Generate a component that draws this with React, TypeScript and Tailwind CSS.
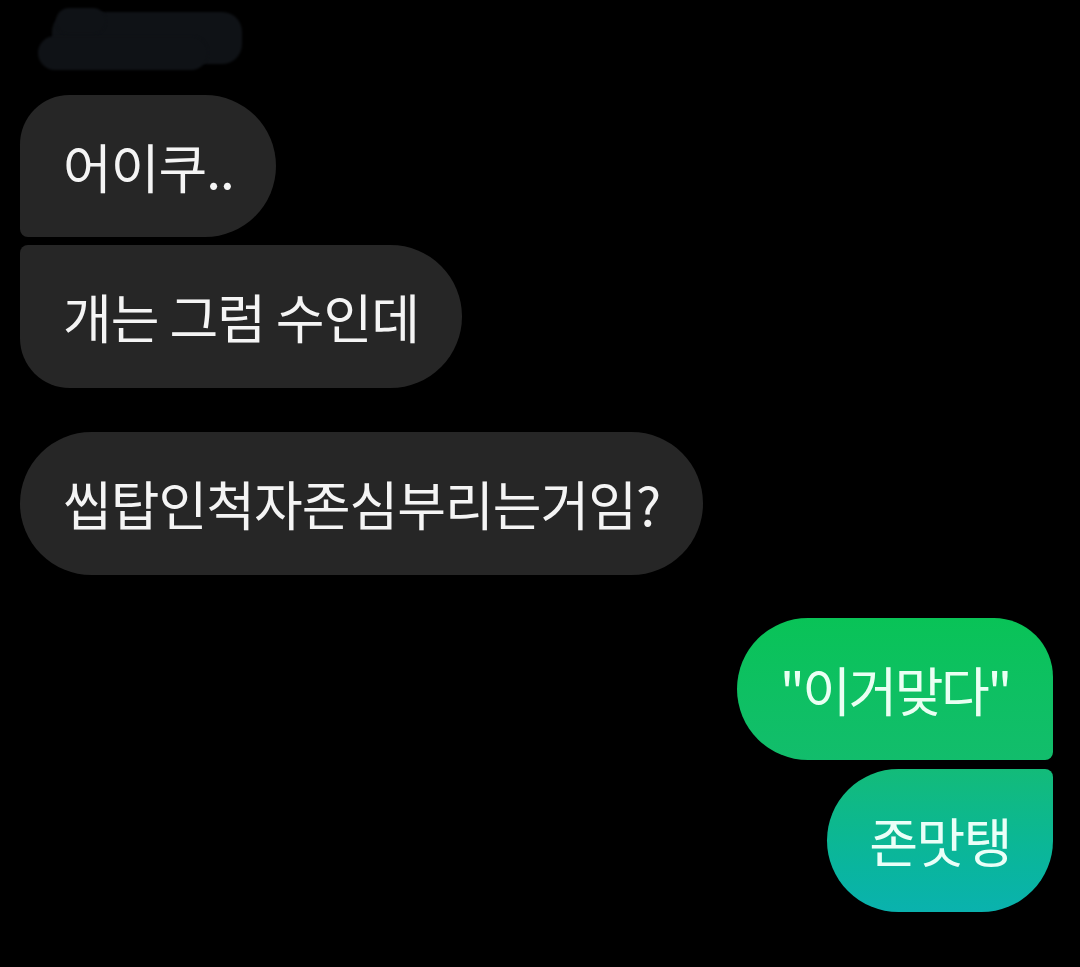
import React from "react";

const font = { fontFamily: '"Noto Sans CJK KR", "Noto Sans", sans-serif' };

export default function App() {
  return (
    <div
      className="min-h-[967px] w-[1080px] bg-black pt-[8px] pl-[20px] pr-[27px] flex flex-col"
      style={font}
    >
      {/* blurred name */}
      <div className="relative ml-[18px] h-[62px] w-[204px]">
        <div className="absolute left-[14px] top-[4px] h-[52px] w-[190px] rounded-[20px] bg-[#0f1216] blur-[1px]" />
        <div className="absolute left-0 top-[28px] h-[34px] w-[170px] rounded-[17px] bg-[#0f1216] blur-[1px]" />
        <div className="absolute left-[18px] top-0 h-[26px] w-[50px] rounded-full bg-[#0f1216] blur-[1px]" />
      </div>

      <div className="mt-[25px] flex flex-col items-start gap-[8px] text-[53px] leading-none tracking-[-1px]">
        <div className="flex h-[142px] items-center rounded-tl-[50px] rounded-tr-[72px] rounded-br-[72px] rounded-bl-[8px] bg-[#262626] pl-[43px] pr-[42px] text-[#f4f4f4]">
          어이쿠..
        </div>
        <div className="flex h-[143px] items-center rounded-tl-[8px] rounded-tr-[72px] rounded-br-[72px] rounded-bl-[50px] bg-[#262626] pl-[43px] pr-[43px] text-[#f4f4f4]">
          개는 그럼 수인데
        </div>
        <div className="mt-[36px] flex h-[143px] items-center rounded-[72px] bg-[#262626] pl-[43px] pr-[43px] text-[#f4f4f4]">
          씹탑인척자존심부리는거임?
        </div>
      </div>

      <div className="mt-[43px] flex flex-col items-end gap-[9px] text-[53px] leading-none">
        <div className="flex h-[142px] items-center rounded-tl-[72px] rounded-tr-[60px] rounded-br-[8px] rounded-bl-[72px] bg-gradient-to-b from-[#09c357] to-[#12bd6c] pl-[43px] pr-[43px] tracking-[-2.5px] text-[#eafff3]">
          "이거맞다"
        </div>
        <div className="flex h-[143px] items-center rounded-tl-[72px] rounded-tr-[8px] rounded-br-[72px] rounded-bl-[72px] bg-gradient-to-b from-[#13bb79] to-[#0ab2ae] pl-[42px] pr-[42px] tracking-[-1.5px] text-[#eafff8]">
          존맛탱
        </div>
      </div>
    </div>
  );
}
